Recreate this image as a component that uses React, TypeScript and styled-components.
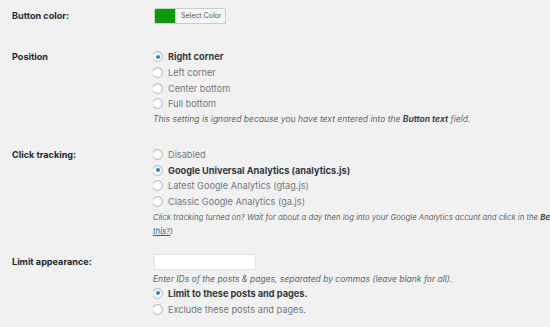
import React from "react";
import styled, { createGlobalStyle } from "styled-components";

const Global = createGlobalStyle`
  html, body { margin: 0; padding: 0; background: #f1f1f1; }
  body { font-family: Inter, "Liberation Sans", sans-serif; color: #23282d; }
`;

const Page = styled.div`
  width: 550px;
  height: 327px;
  overflow: hidden;
  padding: 8px 0 0 12px;
  box-sizing: border-box;
  display: flex;
  flex-direction: column;
`;

const Row = styled.div<{ $gap: number }>`
  display: grid;
  grid-template-columns: 141px 1fr;
  margin-top: ${(p) => p.$gap}px;
`;

const Label = styled.div<{ $lh: number }>`
  font-size: 9.1px;
  font-weight: 700;
  line-height: ${(p) => p.$lh}px;
  color: #23282d;
  white-space: nowrap;
`;

const Field = styled.div`
  display: flex;
  flex-direction: column;
  align-items: flex-start;
  min-width: 0;
  overflow: hidden;
`;

const ColorButton = styled.div`
  display: flex;
  height: 16px;
  margin-left: 1px;
  border: 1px solid #ccc;
  border-radius: 2px;
  background: #f7f7f7;
  box-shadow: 0 1px 0 #ccc;
  box-sizing: border-box;
  overflow: hidden;
`;

const Swatch = styled.span<{ $color: string }>`
  width: 20px;
  background: ${(p) => p.$color};
`;

const SwatchText = styled.span`
  font-size: 7px;
  line-height: 14px;
  padding: 0 4px 0 5px;
  color: #555;
  border-left: 1px solid #ccc;
`;

const Option = styled.label<{ $on?: boolean }>`
  display: flex;
  align-items: center;
  height: 15.7px;
  gap: 5px;
  font-size: 9.2px;
  white-space: nowrap;
  font-weight: ${(p) => (p.$on ? 700 : 400)};
  color: ${(p) => (p.$on ? "#32373c" : "#72777c")};
`;

const Radio = styled.span<{ $on?: boolean }>`
  width: 11px;
  height: 11px;
  margin-left: -1px;
  border-radius: 50%;
  border: 1px solid #b4b9be;
  background: #fff;
  box-sizing: border-box;
  box-shadow: inset 0 1px 2px rgba(0, 0, 0, 0.1);
  display: flex;
  align-items: center;
  justify-content: center;
  flex: none;
  &::after {
    content: "";
    display: ${(p) => (p.$on ? "block" : "none")};
    width: 4px;
    height: 4px;
    border-radius: 50%;
    background: #1e8cbe;
  }
`;

const Note = styled.p<{ $size?: number; $top?: number }>`
  margin: ${(p) => p.$top ?? 0}px 0 0;
  font-size: ${(p) => p.$size ?? 8.5}px;
  line-height: 14px;
  font-style: italic;
  color: #666;
  white-space: nowrap;
  b { color: #444; }
  a { color: #0073aa; text-decoration: underline; }
`;

const TextInput = styled.div`
  width: 102px;
  height: 16px;
  margin-left: 1px;
  background: #fff;
  border: 1px solid #e2e2e2;
  box-sizing: border-box;
`;

type Opt = { text: string; on?: boolean };

const Options = ({ items }: { items: Opt[] }) => (
  <>
    {items.map((o) => (
      <Option key={o.text} $on={o.on}>
        <Radio $on={o.on} />
        {o.text}
      </Option>
    ))}
  </>
);

export default function App() {
  return (
    <>
      <Global />
      <Page>
        <Row $gap={0}>
          <Label $lh={16}>Button color:</Label>
          <Field>
            <ColorButton>
              <Swatch $color="#0b9a0b" />
              <SwatchText>Select Color</SwatchText>
            </ColorButton>
          </Field>
        </Row>

        <Row $gap={25}>
          <Label $lh={15.7}>Position</Label>
          <Field>
            <Options
              items={[
                { text: "Right corner", on: true },
                { text: "Left corner" },
                { text: "Center bottom" },
                { text: "Full bottom" },
              ]}
            />
            <Note>
              This setting is ignored because you have text entered into the <b>Button text</b> field.
            </Note>
          </Field>
        </Row>

        <Row $gap={21}>
          <Label $lh={15.7}>Click tracking:</Label>
          <Field>
            <Options
              items={[
                { text: "Disabled" },
                { text: "Google Universal Analytics (analytics.js)", on: true },
                { text: "Latest Google Analytics (gtag.js)" },
                { text: "Classic Google Analytics (ga.js)" },
              ]}
            />
            <Note $size={7.75}>
              Click tracking turned on? Wait for about a day then log into your Google Analytics accunt and click in the{" "}
              <b>Behavior</b>
              <br />
              <a>this?</a>)
            </Note>
          </Field>
        </Row>

        <Row $gap={16}>
          <Label $lh={16}>Limit appearance:</Label>
          <Field>
            <TextInput />
            <Note $top={2}>Enter IDs of the posts &amp; pages, separated by commas (leave blank for all).</Note>
            <Options
              items={[
                { text: "Limit to these posts and pages.", on: true },
                { text: "Exclude these posts and pages." },
              ]}
            />
          </Field>
        </Row>
      </Page>
    </>
  );
}
